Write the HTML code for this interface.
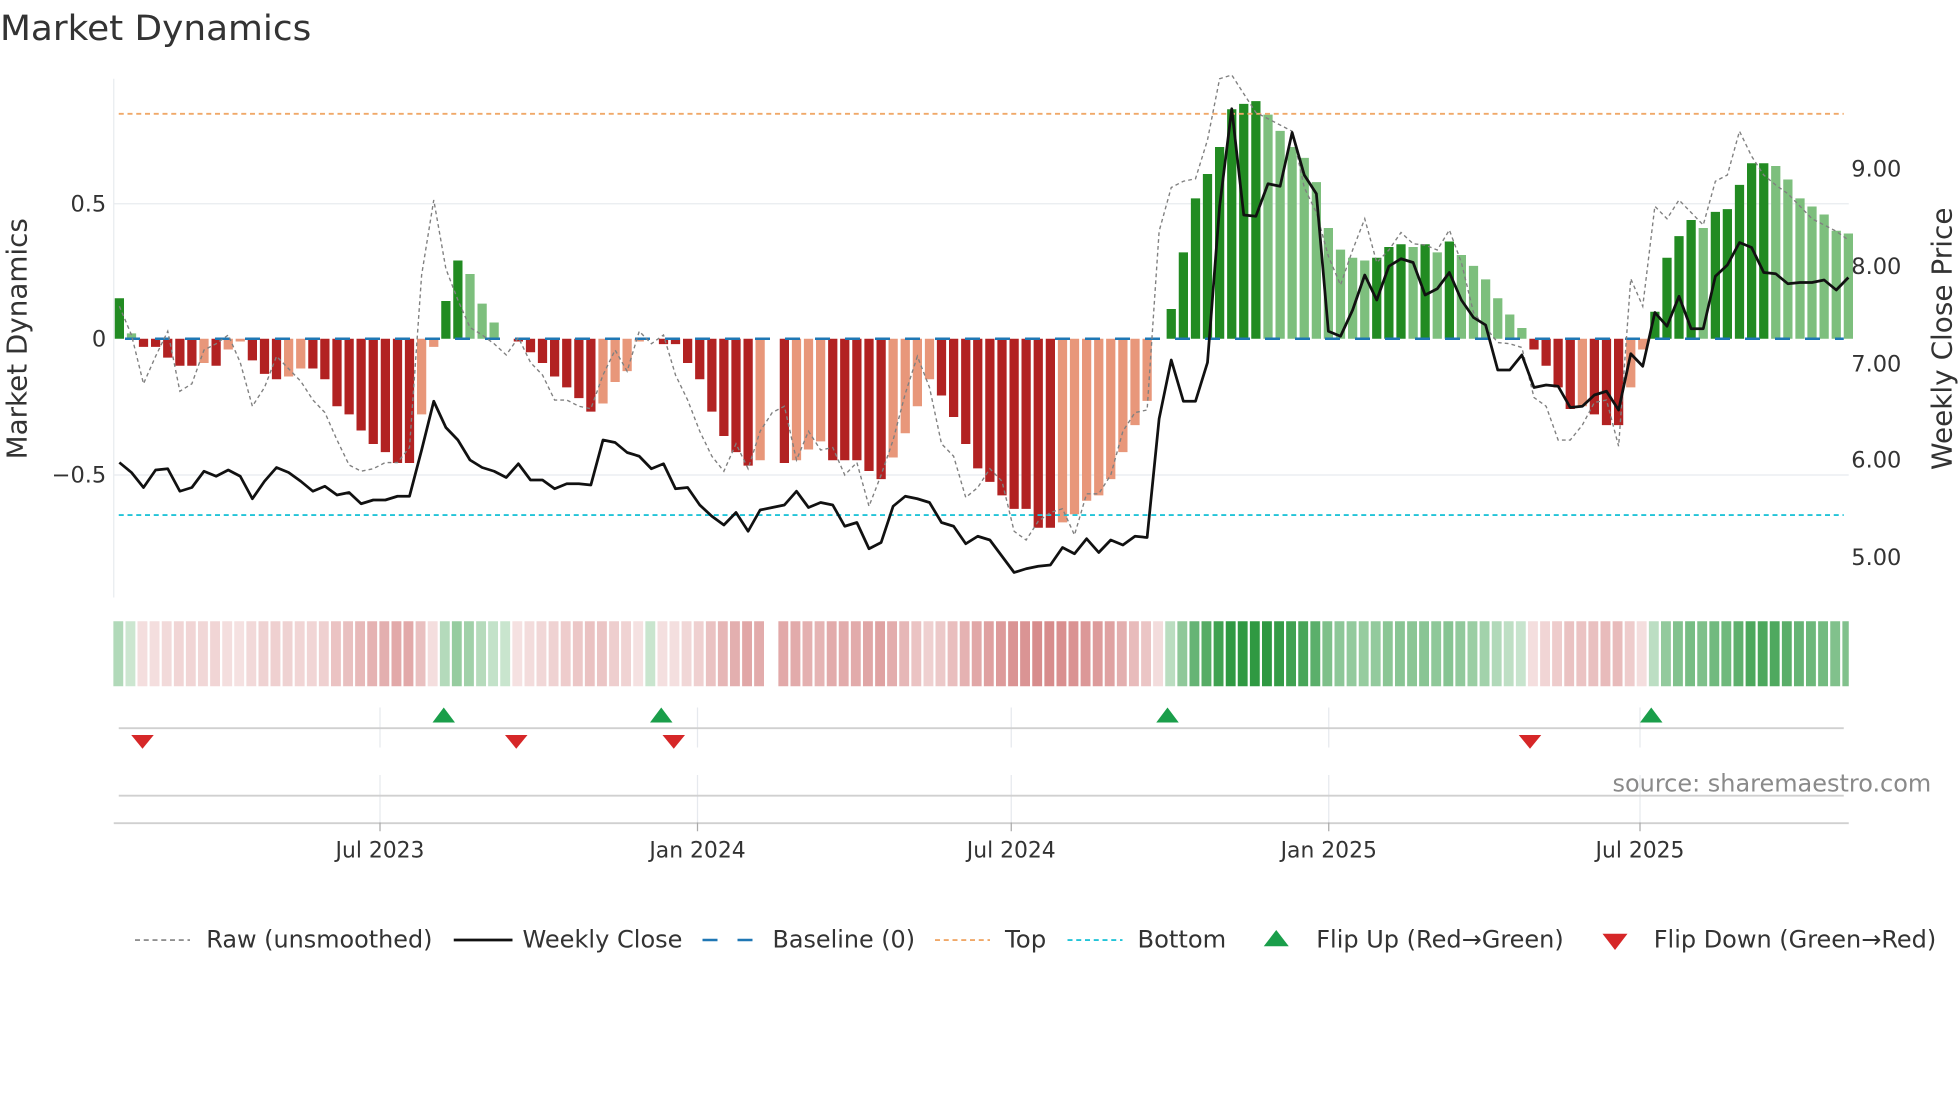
<!DOCTYPE html>
<html><head><meta charset="utf-8"><style>
html,body{margin:0;padding:0;background:#fff;}
svg{display:block;font-family:"DejaVu Sans","Liberation Sans",sans-serif;}
</style></head><body>
<svg id="s" width="1960" height="1102" viewBox="0 0 1568 881.6" xmlns="http://www.w3.org/2000/svg">
<rect width="1568" height="881.6" fill="#fff"/>
<text x="0" y="32" font-size="28" fill="#333" textLength="249" lengthAdjust="spacingAndGlyphs">Market Dynamics</text>
<line x1="91" y1="163" x2="1479" y2="163" stroke="#e8ebef" stroke-width="1"/>
<line x1="91" y1="380" x2="1479" y2="380" stroke="#e8ebef" stroke-width="1"/>
<line x1="91" y1="63" x2="91" y2="478" stroke="#e8ebef" stroke-width="1"/>
<g id="bars"></g>
<line x1="95" y1="91" x2="1475" y2="91" stroke="#f0a868" stroke-width="1.5" stroke-dasharray="4,3"/>
<line x1="95" y1="412" x2="1475" y2="412" stroke="#22c4d8" stroke-width="1.5" stroke-dasharray="4,3"/>
<line x1="95" y1="271" x2="1475" y2="271" stroke="#1f77b4" stroke-width="2" stroke-dasharray="12,12" stroke-dashoffset="-5"/>
<polyline id="raw" fill="none" stroke="#808080" stroke-width="1.1" stroke-dasharray="3,2.5"/>
<polyline id="px" fill="none" stroke="#111" stroke-width="2.2" stroke-linejoin="round"/>
<g font-size="18" fill="#333">
<text x="85" y="169" text-anchor="end">0.5</text>
<text x="85" y="277" text-anchor="end">0</text>
<text x="85" y="386" text-anchor="end">−0.5</text>
<text x="1481" y="141">9.00</text>
<text x="1481" y="219">8.00</text>
<text x="1481" y="297">7.00</text>
<text x="1481" y="374">6.00</text>
<text x="1481" y="452">5.00</text>
<text transform="translate(21,271) rotate(-90)" text-anchor="middle" font-size="22" textLength="193" lengthAdjust="spacingAndGlyphs">Market Dynamics</text>
<text transform="translate(1561,271) rotate(-90)" text-anchor="middle" font-size="22" textLength="210" lengthAdjust="spacingAndGlyphs">Weekly Close Price</text>
</g>
<g id="strip"></g>
<g stroke="#e6e9ee" stroke-width="1">
<line x1="304" y1="566" x2="304" y2="598"/><line x1="558" y1="566" x2="558" y2="598"/><line x1="809" y1="566" x2="809" y2="598"/><line x1="1063" y1="566" x2="1063" y2="598"/><line x1="1312" y1="566" x2="1312" y2="598"/>
<line x1="304" y1="620" x2="304" y2="658"/><line x1="558" y1="620" x2="558" y2="658"/><line x1="809" y1="620" x2="809" y2="658"/><line x1="1063" y1="620" x2="1063" y2="658"/><line x1="1312" y1="620" x2="1312" y2="658"/>
</g>
<line x1="95" y1="582.5" x2="1475" y2="582.5" stroke="#d0d0d0" stroke-width="1.5"/>
<line x1="95" y1="636.5" x2="1475" y2="636.5" stroke="#d0d0d0" stroke-width="1.5"/>
<line x1="91" y1="658.5" x2="1479" y2="658.5" stroke="#d0d0d0" stroke-width="1.5"/>
<g stroke="#aaa" stroke-width="1"><line x1="304" y1="658" x2="304" y2="665"/><line x1="558" y1="658" x2="558" y2="665"/><line x1="809" y1="658" x2="809" y2="665"/><line x1="1063" y1="658" x2="1063" y2="665"/><line x1="1312" y1="658" x2="1312" y2="665"/></g>
<g id="mk"></g>
<g font-size="17.5" fill="#333" text-anchor="middle">
<text x="304" y="686">Jul 2023</text><text x="558" y="686">Jan 2024</text><text x="809" y="686">Jul 2024</text><text x="1063" y="686">Jan 2025</text><text x="1312" y="686">Jul 2025</text>
</g>
<text x="1290" y="633" font-size="19" fill="#8a8a8a" textLength="255" lengthAdjust="spacingAndGlyphs">source: sharemaestro.com</text>
<g font-size="19" fill="#333">
<line x1="108" y1="752" x2="152" y2="752" stroke="#808080" stroke-width="1.3" stroke-dasharray="4,3"/>
<text x="165" y="758" textLength="181" lengthAdjust="spacingAndGlyphs">Raw (unsmoothed)</text>
<line x1="363" y1="752" x2="410" y2="752" stroke="#111" stroke-width="2.2"/>
<text x="418" y="758" textLength="128" lengthAdjust="spacingAndGlyphs">Weekly Close</text>
<line x1="562" y1="752" x2="606" y2="752" stroke="#1f77b4" stroke-width="2" stroke-dasharray="12,16"/>
<text x="618" y="758" textLength="114" lengthAdjust="spacingAndGlyphs">Baseline (0)</text>
<line x1="748" y1="752" x2="792" y2="752" stroke="#f0a868" stroke-width="1.5" stroke-dasharray="4,3"/>
<text x="804" y="758" textLength="33" lengthAdjust="spacingAndGlyphs">Top</text>
<line x1="854" y1="752" x2="898" y2="752" stroke="#22c4d8" stroke-width="1.5" stroke-dasharray="4,3"/>
<text x="910" y="758" textLength="71" lengthAdjust="spacingAndGlyphs">Bottom</text>
<polygon points="1021,744 1031,757 1011,757" fill="#1a9e4a"/>
<text x="1053" y="758" textLength="198" lengthAdjust="spacingAndGlyphs">Flip Up (Red→Green)</text>
<polygon points="1282,747 1302,747 1292,760" fill="#d62728"/>
<text x="1323" y="758" textLength="226" lengthAdjust="spacingAndGlyphs">Flip Down (Green→Red)</text>
</g>
</svg>
<script>
var V=[.15,.02,-.03,-.03,-.07,-.1,-.1,-.09,-.1,-.04,-.01,-.08,-.13,-.15,-.14,-.11,-.11,-.15,-.25,-.28,-.34,-.39,-.42,-.46,-.46,-.28,-.03,.14,.29,.24,.13,.06,0,-.01,-.05,-.09,-.14,-.18,-.22,-.27,-.24,-.16,-.12,-.01,0,-.02,-.02,-.09,-.15,-.27,-.36,-.42,-.47,-.45,null,-.46,-.45,-.41,-.38,-.45,-.45,-.45,-.49,-.52,-.44,-.35,-.25,-.15,-.21,-.29,-.39,-.48,-.53,-.58,-.63,-.63,-.7,-.7,-.68,-.65,-.6,-.58,-.52,-.42,-.32,-.23,0,.11,.32,.52,.61,.71,.85,.87,.88,.83,.77,.71,.67,.58,.41,.33,.3,.29,.3,.34,.35,.34,.35,.32,.36,.31,.27,.22,.15,.09,.04,-.04,-.1,-.18,-.26,-.25,-.28,-.32,-.32,-.18,-.04,.1,.3,.38,.44,.41,.47,.48,.57,.65,.65,.64,.59,.52,.49,.46,.4,.39];
var P=[370,378,390,376,375,393,390,377,381,376,381,399,385,374,378,385,393,389,396,394,403,400,400,397,397,360,321,342,352,368,374,377,382,371,384,384,391,387,387,388,352,354,362,365,375,371,391,390,404,413,420,410,425,408,406,404,393,406,402,404,421,418,439,434,405,397,399,402,418,421,435,429,432,445,458,455,453,452,438,443,431,442,432,436,429,430,335,288,321,321,290,165,87,172,173,147,149,106,140,155,265,269,248,220,240,213,207,210,236,231,218,240,254,260,296,296,284,310,308,309,326,325,316,313,328,283,293,250,261,237,263,263,221,212,194,198,218,219,227,226,226,224,232,222];
var R=[245,268,307,285,265,313,307,280,275,268,290,325,310,285,295,305,320,330,352,372,377,375,370,370,358,220,160,215,240,262,268,275,284,270,290,300,320,320,325,327,300,280,297,265,275,268,300,320,345,365,377,355,375,345,330,325,368,345,360,358,380,370,405,380,352,315,285,310,355,365,398,390,375,385,425,432,417,410,407,428,395,395,380,345,330,328,185,150,145,143,112,63,60,75,90,95,100,105,150,170,205,228,200,175,210,200,186,195,196,200,184,210,250,262,274,275,278,318,325,352,352,340,322,320,357,223,245,165,175,160,170,180,145,140,105,125,140,148,155,165,175,180,185,192];
var NS="http://www.w3.org/2000/svg";
function el(p,t,a){var e=document.createElementNS(NS,t);for(var k in a)e.setAttribute(k,a[k]);document.getElementById(p).appendChild(e);}
var step=(1479-91)/143.5;
function cx(i){return 95.5+i*step;}
var prev=0;
for(var i=0;i<V.length;i++){
 var v=V[i];if(v===null){prev=0;continue;}var x=cx(i)-3.7;
 var dark=(Math.abs(v)>=Math.abs(prev))||(prev*v<=0);
 prev=v;
 var col=v>=0?(dark?'#228b22':'#7dbf7d'):(dark?'#b22222':'#e8977a');
 if(Math.abs(v)>0.003){var y=271-v*216;el('bars','rect',{x:x.toFixed(1),y:Math.min(y,271).toFixed(1),width:7.4,height:Math.abs(271-y).toFixed(1),fill:col});}
 var a=0.22+0.75*Math.min(Math.abs(v)/0.8,1);
 var sc=v>0.003?'rgba(40,150,60,'+a.toFixed(2)+')':'rgba(195,80,80,'+(a*0.75).toFixed(2)+')';
 if(Math.abs(v)<=0.003)sc=(i<50)?'rgba(40,150,60,0.25)':'rgba(195,80,80,0.2)';
 el('strip','rect',{x:(cx(i)-4.8).toFixed(1),y:497,width:Math.min(7.9,1479-(cx(i)-4.8)).toFixed(1),height:52,fill:sc});
}
var pp='',rp='';for(i=0;i<P.length;i++){pp+=cx(i).toFixed(1)+','+P[i]+' ';rp+=cx(i).toFixed(1)+','+R[i]+' ';}
document.getElementById('px').setAttribute('points',pp);
document.getElementById('raw').setAttribute('points',rp);
[355,529,934,1321].forEach(function(x){el('mk','polygon',{points:(x)+',566 '+(x+9)+',578 '+(x-9)+',578',fill:'#1a9e4a'});});
[114,413,539,1224].forEach(function(x){el('mk','polygon',{points:(x-9)+',588 '+(x+9)+',588 '+x+',599',fill:'#d62728'});});
</script>
</body></html>
